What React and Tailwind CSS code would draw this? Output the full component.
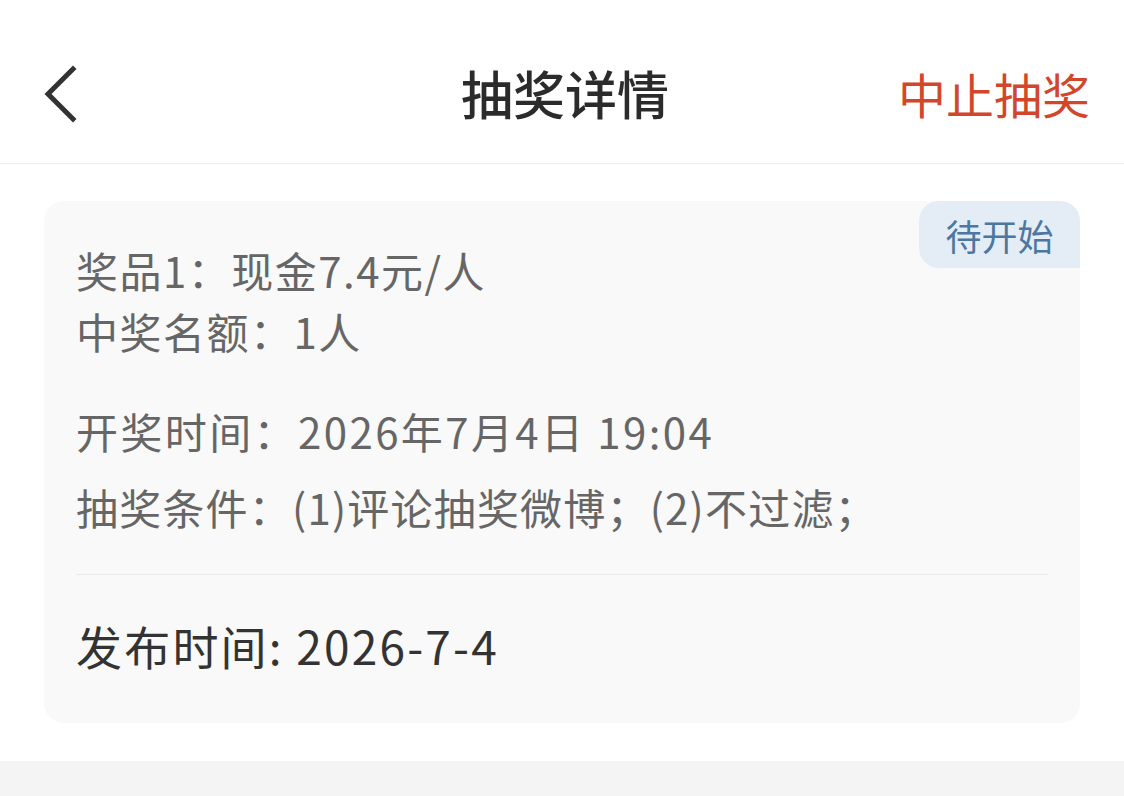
const font = { fontFamily: '"Noto Sans CJK SC", "Noto Sans", sans-serif' };

function BackIcon() {
  return (
    <svg width="40" height="60" viewBox="0 0 40 60" fill="none">
      <path d="M33 6 L8 31 L33 56" stroke="#333" strokeWidth="5" strokeLinecap="square" strokeLinejoin="miter" />
    </svg>
  );
}

export default function App() {
  return (
    <div className="flex h-[796px] w-[1124px] flex-col bg-white" style={font}>
      <header className="flex h-[164px] shrink-0 items-center justify-between border-b border-[#ededed] pl-[40px] pr-[34px] pt-[22px]">
        <button className="flex w-[200px] items-center">
          <BackIcon />
        </button>
        <h1 className="text-[52px] font-medium leading-none text-[#2b2b2b]">抽奖详情</h1>
        <button className="w-[200px] text-right text-[48px] leading-none text-[#d2472b]">中止抽奖</button>
      </header>

      <main className="flex-1 px-[44px] pt-[37px]">
        <section className="relative rounded-[20px] bg-[#f9f9f9] pb-[42px]">
          <span className="absolute right-0 top-0 flex h-[67px] w-[161px] items-center justify-center rounded-bl-[20px] rounded-tl-[20px] rounded-tr-[20px] bg-[#e4edf6] text-[36px] text-[#4b77a2]">
            待开始
          </span>

          <div className="px-[32px] pt-[38px] text-[42px] text-[#666]">
            <p className="leading-[61px] tracking-[1.5px]">奖品1：现金7.4元/人</p>
            <p className="leading-[61px] tracking-[1.5px]">中奖名额：1人</p>
            <p className="mt-[32px] leading-[76px] tracking-[2.4px]">开奖时间：2026年7月4日 19:04</p>
            <p className="leading-[76px] tracking-[1.2px]">抽奖条件：(1)评论抽奖微博；(2)不过滤；</p>
          </div>

          <div className="mx-[32px] mt-[29px] border-t border-[#ebebeb]" />

          <p className="px-[32px] pt-[34px] text-[46px] leading-[72px] tracking-[2.2px] text-[#333]">发布时间: 2026-7-4</p>
        </section>
      </main>

      <footer className="h-[35px] shrink-0 bg-[#f4f4f4]" />
    </div>
  );
}
